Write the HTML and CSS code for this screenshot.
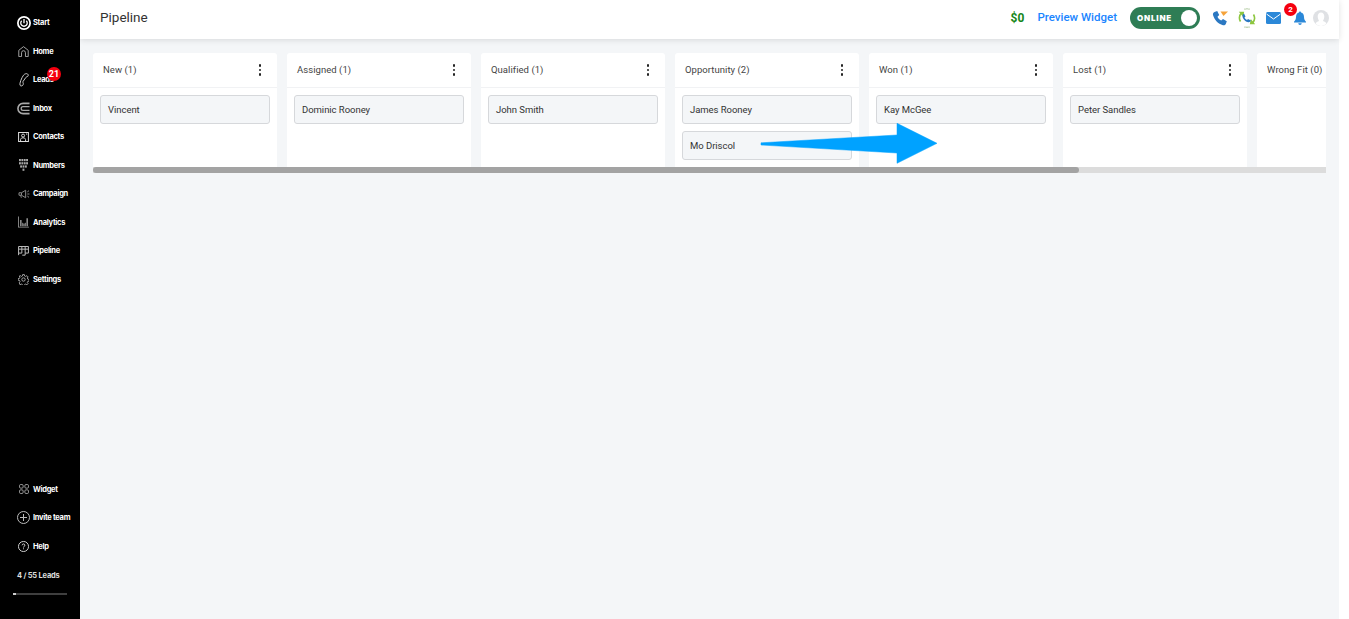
FILE: index.html
```html
<!DOCTYPE html>
<html lang="en">
<head>
<meta charset="utf-8">
<title>Pipeline</title>
<link rel="stylesheet" href="styles.css">
</head>
<body>
<div class="app">
  <nav class="sidebar">
    <div class="nav-group">
      <a class="nav-item"><span class="nav-icon"><svg width="14" height="14" viewBox="0 0 16 16"><circle cx="8" cy="8" r="7" fill="none" stroke="#fff" stroke-width="2"/><path d="M5.400 5.400a3.700 3.700 0 1 0 5.200 0M8 3.500v4.700" fill="none" stroke="#fff" stroke-width="1.500"/></svg></span>Start</a>
      <a class="nav-item"><span class="nav-icon"><svg width="11" height="11" viewBox="0 0 14 14" fill="none" stroke="#aaa" stroke-width="1.200"><path d="M1 13.500V5.500L7 .8 13 5.500v8H9.500V8.500a2.500 2.500 0 0 0-5 0v5z"/></svg></span>Home</a>
      <a class="nav-item"><span class="nav-icon"><svg width="10" height="14" viewBox="0 0 10 14" fill="none" stroke="#ccc"><path d="M6.500.8c1.500-.6 3 .4 2.700 1.800-.2 1.200-1.700 1-2.400 1.900L4 8.500c-.4 1 .6 1.500.2 3C3.800 13 1.700 13.500 1 12.200.3 10.500 2.500 5 4.500 2.200 5 1.500 5.700 1.100 6.500.8z"/></svg></span>Leads<span class="nav-badge">21</span></a>
      <a class="nav-item"><span class="nav-icon"><svg width="13" height="13" viewBox="0 0 14 14" fill="none" stroke="#aaa" stroke-width="1.700"><path d="M13.500 1.500H6.500a5.500 5.500 0 0 0 0 11h7"/><path d="M13.500 5H6.500a2 2 0 0 0 0 4h7" stroke-width="1.400"/></svg></span>Inbox</a>
      <a class="nav-item"><span class="nav-icon"><svg width="11" height="10" viewBox="0 0 13 12" fill="none" stroke="#ddd" stroke-width="1.200"><rect x=".6" y=".6" width="11.800" height="10.800"/><circle cx="6" cy="4.300" r="1.800"/><path d="M3 11V9c0-1.200 1.300-2 3-2s3 .8 3 2v2"/><path d="M9.500 2.500h1.500"/></svg></span>Contacts</a>
      <a class="nav-item"><span class="nav-icon"><svg width="9" height="12" viewBox="0 0 12 12" preserveAspectRatio="none" fill="#aaa"><rect x="0" y="0" width="2.500" height="2.200"/><rect x="3.200" y="0" width="2.500" height="2.200"/><rect x="6.400" y="0" width="2.500" height="2.200"/><rect x="9.500" y="0" width="2.500" height="2.200"/><rect x="0" y="3.200" width="2.500" height="2.200"/><rect x="3.200" y="3.200" width="2.500" height="2.200"/><rect x="6.400" y="3.200" width="2.500" height="2.200"/><rect x="9.500" y="3.200" width="2.500" height="2.200"/><rect x="1.500" y="6.400" width="2.500" height="2.200"/><rect x="4.700" y="6.400" width="2.500" height="2.200"/><rect x="7.900" y="6.400" width="2.500" height="2.200"/><rect x="4.700" y="9.600" width="2.500" height="2.200"/></svg></span>Numbers</a>
      <a class="nav-item"><span class="nav-icon"><svg width="12" height="10" viewBox="0 0 14 12" fill="none" stroke="#888" stroke-width="1.200"><path d="M1 4.500h3v3H1zM4 4.500L9 1.500v9L4 7.500M3 7.500l.8 3M11 3.500l2-1.500M11 6h2.500M11 8.500l2 1.500"/></svg></span>Campaign</a>
      <a class="nav-item"><span class="nav-icon"><svg width="11" height="12" viewBox="0 0 13 13" fill="#999"><path d="M0 0h1v12h12v1H0z"/><path d="M2.500 11.500V4h1.700v7.500zM5 11.500V7l1.700 1.500v3zM7.500 11.500V8.500l1.700-1.500v4.500zM10 11.500V2h1.700v9.500z"/></svg></span>Analytics</a>
      <a class="nav-item"><span class="nav-icon"><svg width="11" height="10" viewBox="0 0 13 12" fill="none" stroke="#bbb" stroke-width="1.200"><path d="M.6 11V.6h11.800v7.900h-3.900M.6 3.800h11.800M4.500.6V8.500H.6M8.500.6v10.400H5"/></svg></span>Pipeline</a>
      <a class="nav-item"><span class="nav-icon"><svg width="11" height="11" viewBox="0 0 13 13" fill="none" stroke="#bbb"><circle cx="6.500" cy="6.500" r="2"/><path d="M5.500.7h2l.3 1.600 1.300.6 1.400-.9 1.400 1.400-.9 1.400.6 1.300 1.600.3v2l-1.600.3-.6 1.300.9 1.400-1.400 1.400-1.400-.9-1.300.6-.3 1.600h-2l-.3-1.600-1.300-.6-1.400.9L1.500 10.400l.9-1.400-.6-1.300-1.600-.3v-2l1.600-.3.6-1.300-.9-1.400L2.900 2l1.400.9 1-.6z"/></svg></span>Settings</a>
    </div>
    <div class="nav-group">
      <a class="nav-item"><span class="nav-icon"><svg width="10" height="10" viewBox="0 0 12 12" fill="none" stroke="#999" stroke-width="1.200"><rect x=".6" y=".6" width="4.400" height="4.400" rx="1.500"/><rect x="7" y=".6" width="4.400" height="4.400" rx="1.500"/><rect x=".6" y="7" width="4.400" height="4.400" rx="1.500"/><rect x="7" y="7" width="4.400" height="4.400" rx="1.500"/></svg></span>Widget</a>
      <a class="nav-item"><span class="nav-icon"><svg width="13" height="13" viewBox="0 0 13 13" fill="none" stroke="#bbb"><circle cx="6.500" cy="6.500" r="6"/><path d="M6.500 3v7M3 6.500h7"/></svg></span>Invite team</a>
      <a class="nav-item"><span class="nav-icon"><svg width="11" height="11" viewBox="0 0 12 12" fill="none" stroke="#ddd"><circle cx="6" cy="6" r="5.500"/><path d="M4.500 4.700C4.500 3.800 5.200 3.200 6 3.200s1.500.6 1.500 1.400c0 1.200-1.500 1.200-1.500 2.500M6 8v1"/></svg></span>Help</a>
      <div class="lead-count">4 / 55 Leads</div>
      <div class="lead-bar"><span class="lead-bar-fill"></span></div>
    </div>
  </nav>

  <div class="main">
    <header class="topbar">
      <h1 class="page-title">Pipeline</h1>
      <div class="top-actions">
        <span class="balance">$0</span>
        <a class="preview">Preview Widget</a>
        <div class="toggle"><span class="toggle-label">ONLINE</span><span class="toggle-knob"></span></div>
        <svg class="call-icon" width="17" height="17" viewBox="0 0 17 17"><path d="M8.500 1.500h7.500l-4.500 4.500z" fill="#f5a33b"/><path d="M2.500 2l2.700-1 2 4-1.700 1.800c.7 1.700 2 3 3.700 3.800l1.800-1.700 3.800 2.300-1 2.800c-.5 1-1.600 1.500-2.800 1.200C6 14 2.500 10 1 5 .7 3.800 1.300 2.500 2.500 2z" fill="#2b78c2"/></svg>
        <svg class="sync-icon" width="20" height="20" viewBox="0 0 20 20"><path d="M3.500 13.500A7.500 7.500 0 0 1 4.500 4.800M16.500 6.500A7.500 7.500 0 0 1 15.500 15.200" fill="none" stroke="#8dc63f" stroke-width="1.600"/><path d="M1.800 3.800h5.400l-1 5.200zM18.200 16.200h-5.400l1-5.200z" fill="#8dc63f"/><path d="M7 5.500l1.500 3-1 1c.5 1 1.500 2 2.500 2.500l1-1 3 1.500c-.5 1.500-2 2-3.500 1.500C8 13.500 5.500 10.500 5.500 8 5.500 6.800 6 6 7 5.500z" fill="#2b78c2"/><path d="M8 1h.01M10 .8h.01M12 1h.01M8 19h.01M10 19.200h.01M12 19h.01" stroke="#6a9a4a" stroke-width="1.200" stroke-linecap="round"/></svg>
        <svg class="mail-icon" width="15" height="12" viewBox="0 0 15 12"><rect width="15" height="12" rx="1.500" fill="#2b88d8"/><path d="M.5 2l7 5 7-5" fill="none" stroke="#fff"/></svg>
        <span class="bell-wrap">
          <svg width="14" height="14" viewBox="0 0 13 14"><path d="M6.500 0.500c.7 0 1 .5 1 1 2 .5 3 2.200 3 4.500 0 2.500.8 3.500 2 4.800v.7H.5v-.7c1.200-1.300 2-2.300 2-4.800 0-2.300 1-4 3-4.500 0-.5.3-1 1-1zM4.800 12.300h3.400c0 1-.8 1.700-1.700 1.700s-1.700-.7-1.700-1.700z" fill="#2b88d8"/></svg>
          <span class="bell-badge">2</span>
        </span>
        <svg class="avatar" width="16" height="16" viewBox="0 0 16 16"><circle cx="8" cy="8" r="8" fill="#dfe1e4"/><path d="M8 2.500c2.200 0 3.300 1.800 3.300 4S10.200 10 10 11c1.500.6 3 1.200 3.500 2.500A7 7 0 0 1 8 16a7 7 0 0 1-5.500-2.500C3 12.200 4.500 11.600 6 11c-.2-1-1.300-2.300-1.300-4.500s1.100-4 3.300-4z" fill="#fff"/></svg>
      </div>
    </header>

    <section class="board-area">
      <div class="board">
        <div class="column">
          <div class="column-head"><span>New (1)</span><span class="dots"><i></i><i></i><i></i></span></div>
          <div class="column-body"><div class="lead-card">Vincent</div></div>
        </div>
        <div class="column">
          <div class="column-head"><span>Assigned (1)</span><span class="dots"><i></i><i></i><i></i></span></div>
          <div class="column-body"><div class="lead-card">Dominic Rooney</div></div>
        </div>
        <div class="column">
          <div class="column-head"><span>Qualified (1)</span><span class="dots"><i></i><i></i><i></i></span></div>
          <div class="column-body"><div class="lead-card">John Smith</div></div>
        </div>
        <div class="column">
          <div class="column-head"><span>Opportunity (2)</span><span class="dots"><i></i><i></i><i></i></span></div>
          <div class="column-body"><div class="lead-card">James Rooney</div><div class="lead-card">Mo Driscol</div></div>
        </div>
        <div class="column">
          <div class="column-head"><span>Won (1)</span><span class="dots"><i></i><i></i><i></i></span></div>
          <div class="column-body"><div class="lead-card">Kay McGee</div></div>
        </div>
        <div class="column">
          <div class="column-head"><span>Lost (1)</span><span class="dots"><i></i><i></i><i></i></span></div>
          <div class="column-body"><div class="lead-card">Peter Sandles</div></div>
        </div>
        <div class="column">
          <div class="column-head"><span>Wrong Fit (0)</span></div>
          <div class="column-body"></div>
        </div>
      </div>
      <div class="scroll-track"><div class="scroll-thumb"></div></div>
    </section>
  </div>
  <div class="edge"></div>
  <svg class="arrow" width="180" height="44" viewBox="0 0 180 44"><path d="M1 20.800 L137 13 L137 1.300 L177 21.300 L137 41.300 L137 31 L1 23 Z" fill="#00a2ff" stroke="#00a2ff" stroke-width=".5" stroke-linejoin="round"/></svg>
</div>
</body>
</html>
```
FILE: styles.css
```css
* { box-sizing: border-box; }
html, body { margin: 0; height: 100%; overflow: hidden; }
body { font-family: Roboto, "Liberation Sans", sans-serif; background: #fff; }
.app { display: flex; height: 619px; position: relative; }

.sidebar { width: 80px; flex: none; background: #000; display: flex; flex-direction: column; justify-content: space-between; padding: 8.5px 0 24px; }
.nav-item { position: relative; display: flex; align-items: center; height: 28.5px; color: #fff; font: 700 7.5px/1 Inter, Roboto, sans-serif; letter-spacing: -.3px; white-space: nowrap; }
.nav-icon { width: 33px; padding-left: 14px; flex: none; display: flex; justify-content: center; align-items: center; }
.nav-badge { position: absolute; left: 47px; top: 1px; width: 14px; height: 14px; border-radius: 50%; background: #f5000f; color: #fff; font: 700 9px/14px Roboto, sans-serif; letter-spacing: 0; text-align: center; }
.lead-count { color: #ddd; font: 700 7.5px/1 Inter, Roboto, sans-serif; letter-spacing: -.2px; padding: 11px 0 0 17px; }
.lead-bar { margin: 14px 13px 0; height: 2px; background: #3f3f3f; }
.lead-bar-fill { display: block; width: 3px; height: 2px; background: #ccc; }

.main { flex: 1; min-width: 0; background: #f4f6f8; display: flex; flex-direction: column; }
.edge { width: 10px; flex: none; background: #fff; }
.topbar { height: 39px; flex: none; background: #fff; display: flex; align-items: center; justify-content: space-between; padding: 0 10px 3px 20px; box-shadow: 0 1px 6px rgba(0,0,0,.12); position: relative; }
.page-title { margin: 0; font: 400 13.5px/1 Roboto, sans-serif; color: #333; }
.top-actions { display: flex; align-items: center; }
.balance { color: #17871c; font: 700 12px/1 Roboto, sans-serif; margin-right: 13px; }
.preview { color: #1a85ff; font: 500 11.5px/1 Roboto, sans-serif; margin-right: 13px; }
.toggle { width: 70px; height: 22px; border-radius: 11px; background: #2e7d55; display: flex; align-items: center; justify-content: space-between; padding: 0 3px 0 7px; margin-right: 12px; }
.toggle-label { color: #fff; font: 900 8px/1 Inter, Roboto, sans-serif; letter-spacing: .8px; }
.toggle-knob { width: 16px; height: 16px; border-radius: 50%; background: #fff; }
.call-icon { margin-right: 8px; }
.sync-icon { margin-right: 9px; }
.mail-icon { margin-right: 12px; }
.bell-wrap { position: relative; display: flex; margin-right: 6px; }
.bell-badge { position: absolute; left: -9px; top: -8px; width: 13px; height: 13px; border-radius: 50%; background: #f5000f; color: #fff; font: 700 8px/13px Roboto, sans-serif; text-align: center; }
.avatar { display: block; }

.board-area { padding: 14px 13px 0 13px; }
.board { display: flex; gap: 10px; height: 114px; overflow: hidden; }
.column { width: 184px; flex: none; background: #fff; border-radius: 3px 3px 0 0; }
.column-head { height: 35px; display: flex; align-items: center; justify-content: space-between; padding: 0 16px 0 10px; border-bottom: 1px solid #f1f2f4; font: 400 9.5px/1 Roboto, sans-serif; color: #444; letter-spacing: .05px; white-space: nowrap; }
.dots { display: flex; flex-direction: column; gap: 2px; }
.dots i { display: block; width: 2.5px; height: 2.5px; border-radius: 50%; background: #222; }
.column-body { padding: 7px 7px 0; display: flex; flex-direction: column; gap: 7px; }
.lead-card { height: 29px; background: #f4f6f8; border: 1px solid #d6d8db; border-radius: 3px; padding: 0 7px; display: flex; align-items: center; font: 400 9.5px/1 Roboto, sans-serif; color: #333; letter-spacing: -.04px; }
.scroll-track { height: 6px; background: #dcdcdc; }
.scroll-thumb { width: 986px; height: 6px; background: #a3a3a3; border-radius: 3px; }

.arrow { position: absolute; left: 760px; top: 122px; }
```
